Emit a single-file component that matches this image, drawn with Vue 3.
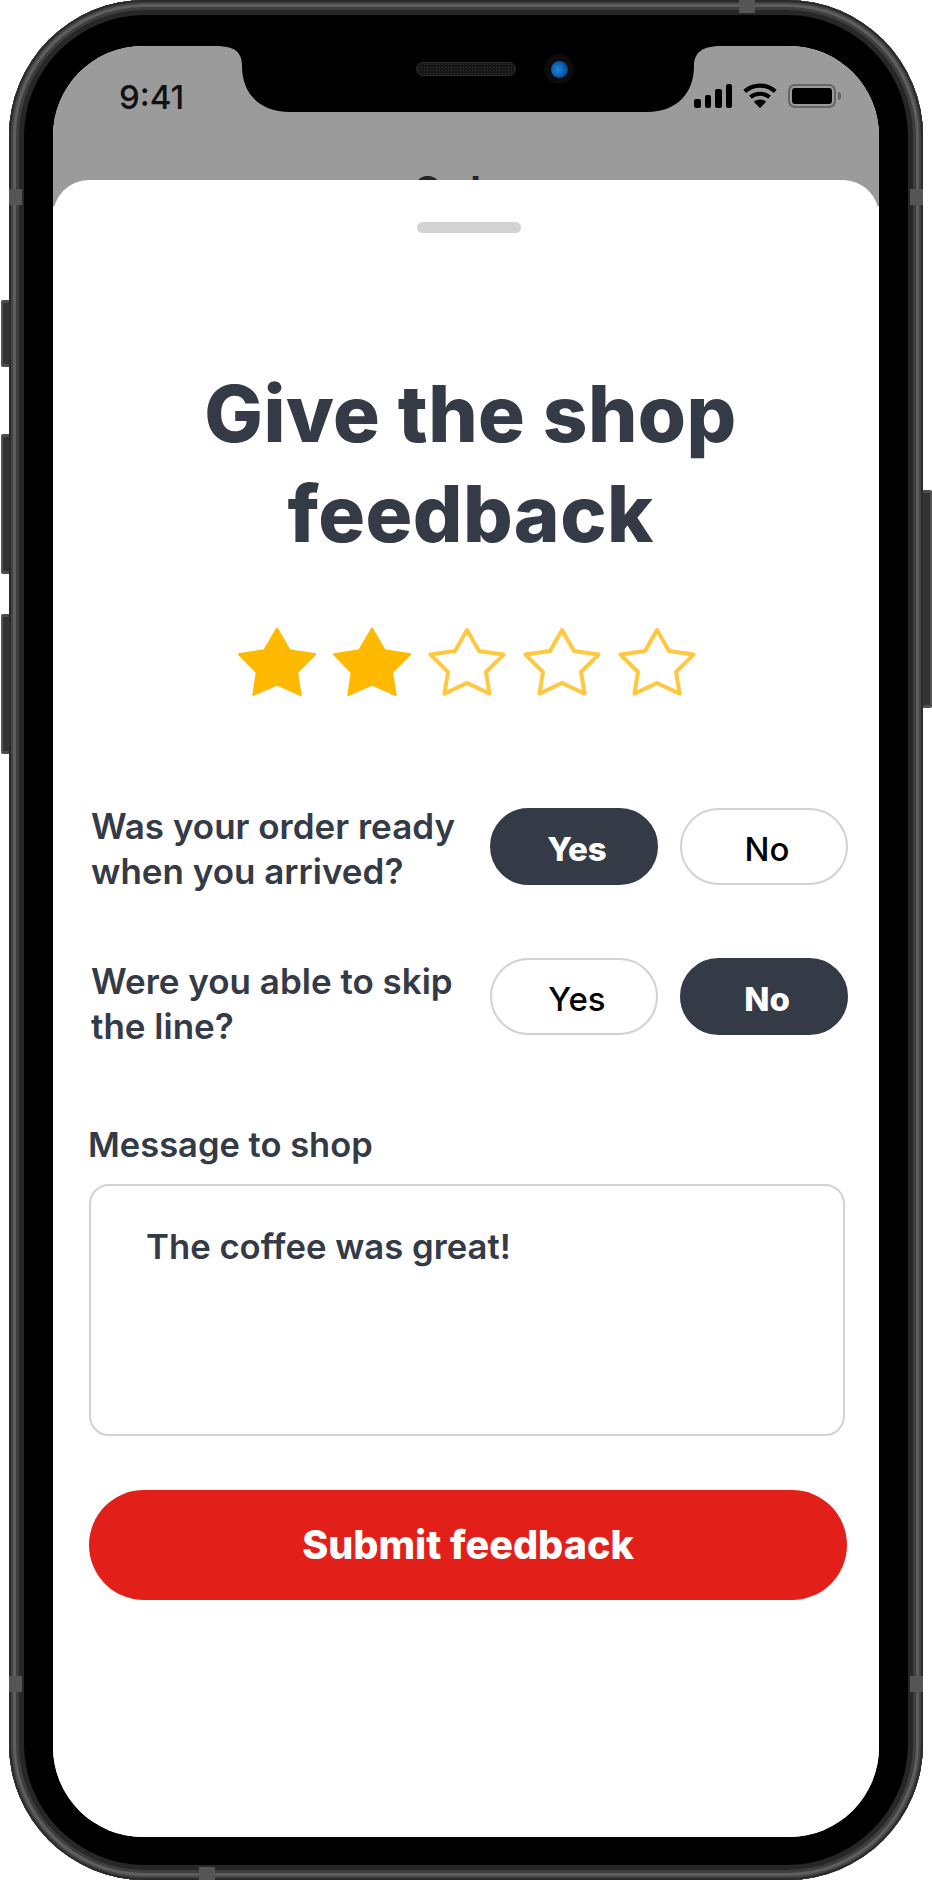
<script setup>
const stars = [true, true, false, false, false]
const starPath = 'M39 1.5 L51.7 23.2 L77.5 27.2 L59 45.5 L62.7 68 L39 57.5 L15.3 68 L18.7 45.5 L1 27.2 L26.3 23.2 Z'
const outlinePath = 'M39 3 L51 24 L75.6 27.6 L58 45 L61.6 66.6 L39 56 L16.4 66.6 L20 45 L2.4 27.6 L27 24 Z'
const questions = [
  { lines: ['Was your order ready', 'when you arrived?'], answer: 'Yes', nudge: 4 },
  { lines: ['Were you able to skip', 'the line?'], answer: 'No', nudge: 14 }
]
const options = ['Yes', 'No']
const bars = [9, 13, 19, 24]
const leftKeys = [
  { top: 300, height: 67 },
  { top: 434, height: 140 },
  { top: 614, height: 140 }
]
</script>

<template>
  <div class="page">
    <div class="key key-left" v-for="k in leftKeys" :key="k.top" :style="{ top: k.top + 'px', height: k.height + 'px' }"></div>
    <div class="key key-right"></div>

    <div class="frame">
      <i class="band band-top"></i>
      <i class="band band-bottom"></i>
      <i class="band band-left1"></i>
      <i class="band band-right1"></i>
      <i class="band band-left2"></i>
      <i class="band band-right2"></i>

      <div class="screen">
        <div class="backdrop">
          <div class="status">
            <span class="time">9:41</span>
            <div class="status-icons">
              <div class="signal">
                <span v-for="h in bars" :key="h" :style="{ height: h + 'px' }"></span>
              </div>
              <svg class="wifi" width="34" height="25" viewBox="0 0 34 25">
                <path d="M1.8 8.4C10.5 0.6 23.5 0.6 32.2 8.4" fill="none" stroke="#000" stroke-width="4.2" />
                <path d="M7.4 14.2C12.8 9.6 21.2 9.6 26.6 14.2" fill="none" stroke="#000" stroke-width="4.2" />
                <path d="M17 25L10.8 18.8C14.4 15.6 19.6 15.6 23.2 18.8Z" fill="#000" />
              </svg>
              <div class="battery"><span class="cell"></span></div>
              <span class="nub"></span>
            </div>
          </div>
          <div class="behind">Order</div>
        </div>

        <svg class="notch" width="510" height="70" viewBox="0 0 510 70">
          <path d="M0 0H506C488 0 479 6 479 20C479 46 463 66 432 66H75C43 66 27 46 27 20C27 6 20 0 0 0Z" fill="#000" />
        </svg>
        <div class="speaker"></div>
        <div class="camera"><span class="lens"></span></div>

        <div class="sheet">
          <div class="handle"></div>
          <h1 class="title">Give the shop<br />feedback</h1>
          <div class="stars">
            <svg v-for="(on, i) in stars" :key="i" width="78" height="70" viewBox="0 0 78 70">
              <path v-if="on" :d="starPath" fill="#ffb900" stroke="#ffb900" stroke-width="2" stroke-linejoin="round" />
              <path v-else :d="outlinePath" fill="none" stroke="#ffc840" stroke-width="4" stroke-linejoin="round" />
            </svg>
          </div>

          <div class="questions">
            <div class="question" v-for="q in questions" :key="q.lines[0]">
              <p class="q-text" :style="{ marginTop: q.nudge + 'px' }"><span v-for="l in q.lines" :key="l">{{ l }}</span></p>
              <div class="choices">
                <div v-for="o in options" :key="o" class="choice" :class="{ active: q.answer === o }">{{ o }}</div>
              </div>
            </div>
          </div>

          <div class="field-label">Message to shop</div>
          <div class="field">The coffee was great!</div>
          <div class="submit">Submit feedback</div>
        </div>
      </div>
    </div>
  </div>
</template>

<style>
html, body { margin: 0; background: #fff; }
</style>

<style scoped>
.page {
  position: relative;
  width: 932px;
  height: 1882px;
  padding: 0 9px 2px;
  box-sizing: border-box;
  font-family: Inter, "Noto Sans", sans-serif;
  overflow: hidden;
}
.key {
  position: absolute;
  background: #333;
  box-shadow: inset 2px 0 0 #555, inset 0 3px 0 #4d4d4d, inset 0 -3px 0 #4d4d4d;
}
.key-left { left: 1px; width: 9px; border-radius: 3px 0 0 3px; }
.key-right { right: 0; top: 490px; width: 10px; height: 218px; border-radius: 0 3px 3px 0; box-shadow: inset -2px 0 0 #555, inset 0 3px 0 #4d4d4d, inset 0 -3px 0 #4d4d4d; }

.frame {
  position: relative;
  height: 1880px;
  padding: 46px 44px 43px;
  box-sizing: border-box;
  background: #000;
  border-radius: 136px;
  box-shadow:
    inset 0 0 0 2px #2a2a2a,
    inset 0 0 0 4px #444,
    inset 0 0 0 7px #5e5e5e,
    inset 0 0 0 10px #3e3e3e,
    inset 0 0 0 15px #272727;
}
.band { position: absolute; background: #555; }
.band-top { left: 730px; top: 0; width: 16px; height: 13px; }
.band-bottom { left: 190px; bottom: 0; width: 16px; height: 13px; }
.band-left1 { left: 0; top: 189px; width: 13px; height: 16px; }
.band-right1 { right: 0; top: 189px; width: 13px; height: 16px; }
.band-left2 { left: 0; top: 1676px; width: 13px; height: 16px; }
.band-right2 { right: 0; top: 1676px; width: 13px; height: 16px; }

.screen {
  position: relative;
  height: 100%;
  border-radius: 90px;
  overflow: hidden;
  background: #fff;
}
.backdrop { height: 160px; background: #9b9b9b; }
.status { display: flex; justify-content: space-between; padding: 33px 38px 0 66px; height: 58px; box-sizing: content-box; }
.time { font: 500 33px/36px Inter, "Liberation Sans", sans-serif; color: #111; }
.status-icons { display: flex; align-items: flex-end; height: 29px; }
.signal { display: flex; align-items: flex-end; gap: 4px; margin-right: 11px; }
.signal span { width: 6.5px; background: #000; border-radius: 2px; }
.wifi { margin-right: 11px; }
.battery {
  width: 48px;
  height: 24px;
  box-sizing: border-box;
  border: 2px solid #666;
  border-radius: 7px;
  padding: 2px;
}
.cell { display: block; height: 100%; background: #000; border-radius: 3px; }
.nub { width: 3px; height: 8px; margin: 0 0 8px 2px; background: #666; border-radius: 0 3px 3px 0; }
.behind {
  margin-top: 30px;
  text-align: center;
  font: 700 38px/46px Inter, sans-serif;
  color: #22252b;
}

.notch { position: absolute; left: 162px; top: 0; }
.speaker {
  position: absolute;
  left: 363px;
  top: 16px;
  width: 100px;
  height: 14px;
  box-sizing: border-box;
  border: 1px solid #2c2c2c;
  border-radius: 7px;
  background: #161616 radial-gradient(#333 1px, transparent 1px) 0 0 / 3px 3px;
}
.camera {
  position: absolute;
  left: 491px;
  top: 8px;
  width: 30px;
  height: 30px;
  display: flex;
  align-items: center;
  justify-content: center;
  background: #0a0c10;
  border-radius: 50%;
}
.lens {
  width: 17px;
  height: 17px;
  border-radius: 50%;
  background: radial-gradient(circle at 40% 50%, #1f86e0 0, #0a5aa8 55%, #06305c 100%);
}

.sheet {
  position: absolute;
  left: 0;
  right: 0;
  top: 134px;
  bottom: 0;
  box-sizing: border-box;
  padding: 42px 31px 0 36px;
  background: #fff;
  border-radius: 36px 36px 0 0;
  color: #343a46;
}
.handle { width: 104px; height: 11px; margin: 0 auto; border-radius: 6px; background: #d3d3d3; }
.title {
  margin: 131px 0 0 4px;
  text-align: center;
  font-size: 78px;
  line-height: 100px;
  font-weight: 800;
  letter-spacing: 0.4px;
}
.stars { display: flex; justify-content: center; gap: 17px; margin-top: 63px; transform: translateX(-2px); }
.questions { display: flex; flex-direction: column; gap: 73px; margin-top: 111px; }
.question { display: flex; align-items: center; justify-content: space-between; height: 77px; }
.q-text {
  display: flex;
  flex-direction: column;
  margin: 0 0 0 2px;
  font-size: 35px;
  line-height: 44.5px;
  font-weight: 600;
  white-space: nowrap;
}
.choices { display: flex; gap: 22px; }
.choice {
  width: 168px;
  height: 77px;
  box-sizing: border-box;
  display: flex;
  align-items: center;
  justify-content: center;
  padding: 4px 0 0 6px;
  border: 2px solid #d2d2d2;
  border-radius: 39px;
  color: #000;
  font-size: 33px;
  font-weight: 500;
}
.choice.active { background: #343a46; border-color: #343a46; color: #fff; font-weight: 800; }
.field-label { margin: 88px 0 0 -1px; font-size: 34.5px; line-height: 44px; font-weight: 600; }
.field {
  width: 756px;
  height: 252px;
  margin-top: 17px;
  box-sizing: border-box;
  padding: 38px 55px;
  border: 2px solid #d2d2d2;
  border-radius: 20px;
  font-size: 34.7px;
  line-height: 44px;
  font-weight: 600;
}
.submit {
  width: 758px;
  height: 110px;
  margin-top: 54px;
  display: flex;
  align-items: center;
  justify-content: center;
  background: #e21f18;
  border-radius: 55px;
  color: #fff;
  font-size: 39.5px;
  font-weight: 800;
}
</style>
